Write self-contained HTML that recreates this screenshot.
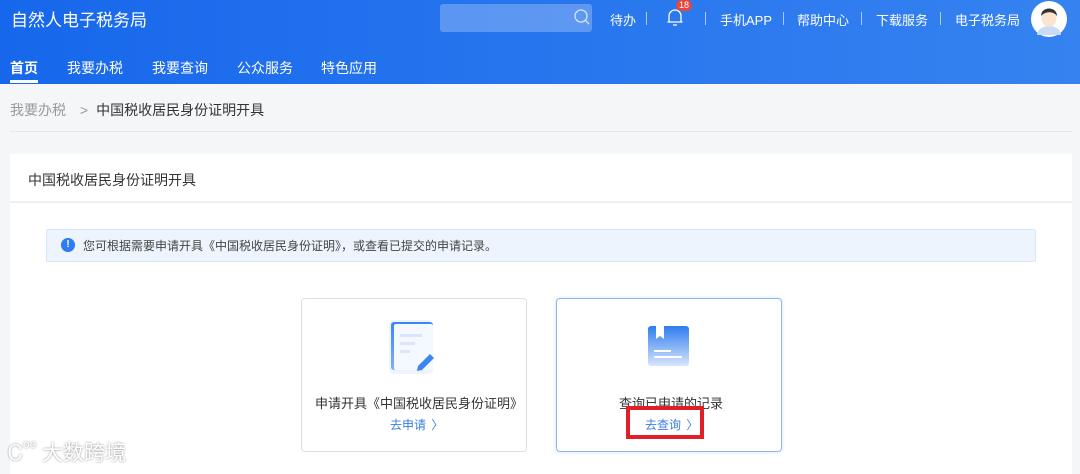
<!DOCTYPE html>
<html><head><meta charset="utf-8"><style>
*{margin:0;padding:0;box-sizing:border-box}
body{width:1080px;height:471px;overflow:hidden;background:#f5f6f8;font-family:"Liberation Sans","Noto Sans CJK SC",sans-serif;position:relative;color:#333}
.hdr{position:absolute;left:0;top:0;width:1080px;height:84px;background:linear-gradient(90deg,#1767ec,#2a78ee 60%,#3582f0)}
.abs{position:absolute;white-space:nowrap}
.top{color:#fff;font-size:13px;top:10px}
.sep{position:absolute;top:12px;width:1px;height:13px;background:rgba(255,255,255,.6)}
.nav{color:#fff;font-size:14px;top:58px}
</style></head><body>
<div class="hdr"></div>
<div class="abs" style="left:11px;top:6px;color:#fff;font-size:17px">自然人电子税务局</div>
<div class="abs" style="left:440px;top:4px;width:152px;height:28px;background:rgba(255,255,255,.25);border-radius:3px"></div>
<svg class="abs" style="left:573px;top:8px" width="18" height="18" viewBox="0 0 18 18"><circle cx="8" cy="8" r="6" fill="none" stroke="#d6e4fb" stroke-width="1.3"/><line x1="12.3" y1="12.3" x2="16" y2="16" stroke="#d6e4fb" stroke-width="1.3"/></svg>
<div class="abs top" style="left:610px">待办</div>
<div class="sep" style="left:646px"></div>
<svg class="abs" style="left:665px;top:7px" width="20" height="20" viewBox="0 0 20 20"><path d="M4 15 V9 a6 6 0 0 1 12 0 V15 Z M2.5 15 H17.5 M8 18 H12" fill="none" stroke="#fff" stroke-width="1.3"/></svg>
<div class="abs" style="left:676px;top:0;width:16px;height:11px;background:#e8453c;border-radius:6px;color:#fff;font-size:9px;line-height:11px;text-align:center">18</div>
<div class="sep" style="left:705px"></div>
<div class="top abs" style="left:720px">手机APP</div>
<div class="sep" style="left:783px"></div>
<div class="top abs" style="left:797px">帮助中心</div>
<div class="sep" style="left:777px;display:none"></div>
<div class="sep" style="left:861px"></div>
<div class="top abs" style="left:876px">下载服务</div>
<div class="sep" style="left:940px"></div>
<div class="top abs" style="left:955px">电子税务局</div>
<svg class="abs" style="left:1031px;top:1px" width="36" height="36" viewBox="0 0 36 36"><circle cx="18" cy="18" r="18" fill="#fff"/><path d="M6 34 a12 9 0 0 1 24 0 Z" fill="#c9dbf5"/><ellipse cx="18" cy="17" rx="7.5" ry="9" fill="#fce3cf"/><path d="M10 15 C10 5 26 5 26 15 C23 10 14 10 10 15 Z" fill="#333"/></svg>
<div class="abs nav" style="left:10px;font-weight:bold">首页</div>
<div class="abs" style="left:10px;top:80px;width:28px;height:3px;background:#fff"></div>
<div class="abs nav" style="left:67px">我要办税</div>
<div class="abs nav" style="left:152px">我要查询</div>
<div class="abs nav" style="left:237px">公众服务</div>
<div class="abs nav" style="left:321px">特色应用</div>
<div class="abs" style="left:10px;top:100px;font-size:14px;color:#999">我要办税 <span style="margin:0 8px 0 10px">&gt;</span><span style="color:#333">中国税收居民身份证明开具</span></div>
<div class="abs" style="left:10px;top:131px;width:1062px;height:1px;background:#e4e6ea"></div>
<div class="abs" style="left:10px;top:154px;width:1062px;height:320px;background:#fff"></div>
<div class="abs" style="left:28px;top:170px;font-size:14px;color:#333">中国税收居民身份证明开具</div>
<div class="abs" style="left:10px;top:201px;width:1062px;height:2px;background:#eef0f3"></div>
<div class="abs" style="left:46px;top:229px;width:990px;height:33px;background:#edf4fd;border:1px solid #d7e6fa;border-radius:2px"></div>
<div class="abs" style="left:61px;top:238px;width:14px;height:14px;border-radius:50%;background:#2e7cf0;color:#fff;font-size:10px;font-weight:bold;text-align:center;line-height:14px">!</div>
<div class="abs" style="left:83px;top:237px;font-size:12px;color:#444">您可根据需要申请开具《中国税收居民身份证明》，或查看已提交的申请记录。</div>
<div class="abs" style="left:301px;top:298px;width:226px;height:154px;border:1px solid #dcdfe4;border-radius:4px;background:#fff"></div>
<div class="abs" style="left:556px;top:298px;width:226px;height:154px;border:1px solid #8fb6f1;border-radius:4px;background:#fff;box-shadow:0 0 4px rgba(46,124,240,.2)"></div>
<svg class="abs" style="left:385px;top:318px" width="60" height="60" viewBox="0 0 60 60"><defs><linearGradient id="g" x1="0" y1="0" x2="0" y2="1"><stop offset="0" stop-color="#3a86f2"/><stop offset="1" stop-color="#7fb0f7"/></linearGradient></defs><rect x="4" y="2" width="44" height="54" rx="5" fill="#eef4fe"/><rect x="6" y="4" width="42" height="48" rx="3" fill="url(#g)"/><rect x="9" y="6" width="39" height="46" rx="2" fill="#f4f8ff"/><rect x="15" y="16" width="22" height="3" fill="#d9e6fa"/><rect x="15" y="24" width="15" height="3" fill="#d9e6fa"/><rect x="15" y="32" width="10" height="3" fill="#d9e6fa"/><path d="M33 48 L45 36 L49 40 L37 52 L32 53 Z" fill="#3a86f2"/></svg>
<svg class="abs" style="left:645px;top:323px" width="46" height="46" viewBox="0 0 46 46"><defs><linearGradient id="h" x1="0" y1="0" x2="0" y2="1"><stop offset="0" stop-color="#2e7cf0"/><stop offset="1" stop-color="#d8e6fb"/></linearGradient></defs><rect x="3" y="3" width="41" height="40" rx="3" fill="url(#h)"/><path d="M11 3 H19 V16 L15 13 L11 16 Z" fill="#fff"/><rect x="9" y="27" width="17" height="2" fill="#fff"/><rect x="9" y="33" width="28" height="2" fill="#fff"/></svg>
<div class="abs" style="left:315px;top:393px;font-size:13px;color:#333">申请开具《中国税收居民身份证明》</div>
<div class="abs" style="left:390px;top:416px;font-size:12px;color:#3a7ee8">去申请 <span style="margin-left:2px">〉</span></div>
<div class="abs" style="left:619px;top:393px;font-size:13px;color:#333">查询已申请的记录</div>
<div class="abs" style="left:645px;top:416px;font-size:12px;color:#3a7ee8">去查询 <span style="margin-left:2px">〉</span></div>
<div class="abs" style="left:626px;top:406px;width:78px;height:33px;border:4px solid #e01f26"></div>
<div class="abs" style="left:8px;top:437px;font-size:21px;color:#fff;text-shadow:0 0 2px #888">Ꮯ<span style="font-size:12px;vertical-align:top">oo</span> 大数跨境</div>
</body></html>
